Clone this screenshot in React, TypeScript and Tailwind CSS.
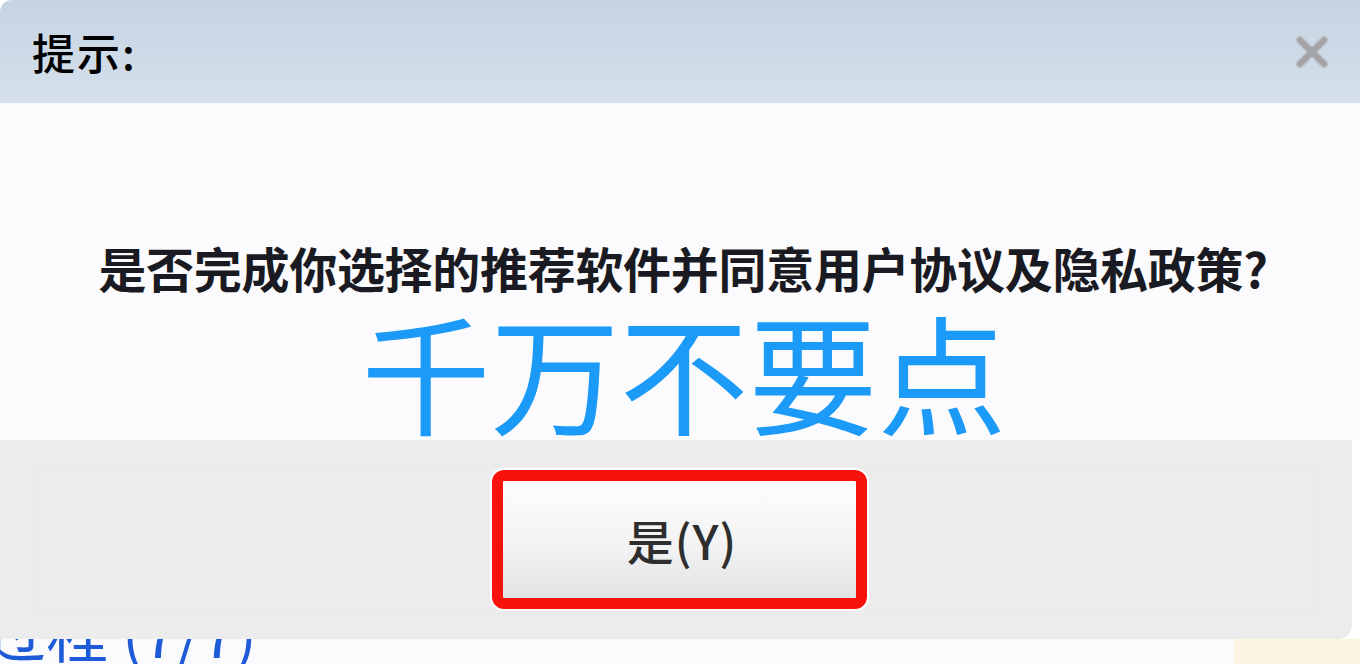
import type React from 'react';

const CJK = { fontFamily: '"Noto Sans CJK SC", "Noto Sans", sans-serif' };

const CloseIcon: React.FC = () => (
  <svg width="36" height="36" viewBox="0 0 36 36" className="block">
    <g strokeLinecap="round">
      <line x1="6" y1="6" x2="30" y2="30" stroke="#c4c8cc" strokeWidth="9" />
      <line x1="30" y1="6" x2="6" y2="30" stroke="#c4c8cc" strokeWidth="9" />
      <line x1="6" y1="6" x2="30" y2="30" stroke="#a2a4a7" strokeWidth="6" />
      <line x1="30" y1="6" x2="6" y2="30" stroke="#a2a4a7" strokeWidth="6" />
    </g>
  </svg>
);

const App: React.FC = () => (
  <div className="w-[1360px] h-[664px] overflow-hidden bg-white flex flex-col" style={CJK}>
    {/* title bar */}
    <div className="h-[103px] shrink-0 rounded-tl-[12px] bg-gradient-to-b from-[#c6d3e1] to-[#d5e0ec] flex items-center justify-between pl-[32px] pr-[30px]">
      <span className="text-[43px] leading-none font-medium tracking-[2px] text-black">提示:</span>
      <CloseIcon />
    </div>

    {/* message body */}
    <div className="h-[337px] shrink-0 bg-[#fbfbfd] flex flex-col items-center pt-[140px]">
      <p className="text-[48px] leading-[48px] font-bold text-[#1a1a22] tracking-[-0.3px] pl-[6px]">
        是否完成你选择的推荐软件并同意用户协议及隐私政策?
      </p>
      <p className="mt-[15px] text-[129px] leading-[128px] text-[#1b9bf7] pl-[8px]">千万不要点</p>
    </div>

    {/* button footer */}
    <div className="h-[199px] shrink-0 w-[1352px] rounded-br-[14px] bg-[#ececed] flex items-center justify-center px-[34px]">
      <div className="w-full h-[150px] border border-[#e9e9ea] rounded-[6px] flex items-center justify-center">
        <div className="ml-[6px] rounded-[14px] p-[2px] bg-white">
          <button
            type="button"
            className="w-[375px] h-[139px] border-[11px] border-[#f8120c] rounded-[12px] bg-gradient-to-b from-[#fdfdfd] via-[#f4f4f5] to-[#e1e3e5] flex items-center justify-center"
          >
            <span className="pl-[6px] text-[47px] leading-none font-medium tracking-[1px] text-[#2e2e2e]">是(Y)</span>
          </button>
        </div>
      </div>
    </div>

    {/* page behind the dialog */}
    <div className="h-[25px] shrink-0 flex">
      <div className="flex-1 bg-[#fbfbfd] overflow-hidden">
        <div className="-mt-[44px] -ml-[16px] text-[62px] leading-[72px] text-[#1d5bd8] whitespace-nowrap">
          过程 (7/7)
        </div>
      </div>
      <div className="w-[126px] bg-[#fdf4e2]" />
    </div>
  </div>
);

export default App;
